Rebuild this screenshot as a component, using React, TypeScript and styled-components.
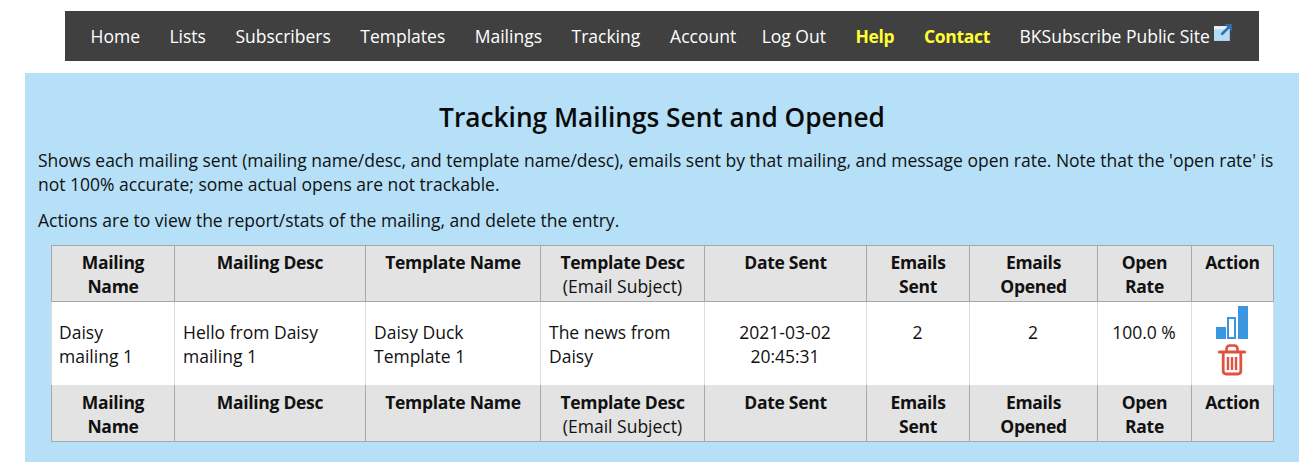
import React from "react";
import styled, { createGlobalStyle } from "styled-components";

const GlobalStyle = createGlobalStyle`
  html, body {
    margin: 0;
    padding: 0;
    background: #ffffff;
    font-family: "Open Sans", "Liberation Sans", sans-serif;
    font-size: 17.5px;
    line-height: 24px;
    color: #111111;
  }
`;

const Page = styled.div`
  width: 1315px;
  height: 468px;
  overflow: hidden;
  padding-top: 11px;
  box-sizing: border-box;
`;

const Nav = styled.nav`
  margin-left: 65px;
  width: 1194px;
  height: 50px;
  box-sizing: border-box;
  background: #404040;
  display: flex;
  align-items: center;
  padding-left: 25.5px;
`;

const NavItem = styled.a<{ $highlight?: boolean; $gap: number }>`
  color: ${({ $highlight }) => ($highlight ? "#ffff33" : "#ffffff")};
  font-weight: ${({ $highlight }) => ($highlight ? 700 : 400)};
  margin-right: ${({ $gap }) => $gap}px;
  white-space: nowrap;
  display: flex;
  align-items: center;
  letter-spacing: ${({ $highlight }) => ($highlight ? "-0.3px" : "0")};
`;

const ExternalIcon = styled.svg`
  width: 19px;
  height: 19px;
  margin-left: 4px;
  margin-top: -8px;
`;

const Main = styled.main`
  margin: 12px 0 0 25px;
  width: 1274px;
  height: 389px;
  box-sizing: border-box;
  background: #b5e0f7;
  padding: 26px 13px 0;
`;

const Title = styled.h1`
  margin: 0 0 13px;
  font-size: 26.25px;
  line-height: 36px;
  font-weight: 600;
  text-align: center;
  color: #0a0a0a;
`;

const Para = styled.p`
  margin: 0 0 12px;
`;

const Table = styled.table`
  margin: 13px 0 0 13px;
  width: 1222px;
  table-layout: fixed;
  border-collapse: collapse;
  border: 1px solid #a8a8a8;
`;

const Col = styled.col<{ $width: number }>`
  width: ${({ $width }) => $width}px;
`;

const HeadCell = styled.th`
  background: #e3e3e3;
  border: 1px solid #a8a8a8;
  border-top: 0;
  padding: 4px 7px 3px;
  height: 48px;
  vertical-align: top;
  text-align: center;
  font-weight: 700;
  letter-spacing: -0.3px;
  color: #111111;
`;

const HeadNote = styled.span`
  font-weight: 400;
  letter-spacing: 0;
`;

const FootCell = styled(HeadCell)`
  padding-top: 5px;
  border-bottom: 0;
`;

const Cell = styled.td`
  background: #ffffff;
  border-left: 1px solid #dddddd;
  border-right: 1px solid #dddddd;
  padding: 18px 16px 17px 8px;
  vertical-align: top;
  text-align: left;
  &:first-child {
    padding-left: 7px;
    padding-right: 32px;
  }
`;

const CenterCell = styled(Cell)`
  padding-left: 7px;
  padding-right: 8px;
  text-align: center;
`;

const ActionCell = styled(CenterCell)`
  padding: 3px 1px 0 0;
  line-height: 0;
`;

const ActionIcon = styled.svg<{ $size: number; $top?: number }>`
  display: block;
  margin: ${({ $top }) => $top ?? 0}px auto 0;
  width: ${({ $size }) => $size}px;
  height: ${({ $size }) => $size}px;
`;

const COLUMNS = [123, 191, 175, 164, 162, 103, 128, 94, 82];

const navItems = [
  { label: "Home", gap: 29.5 },
  { label: "Lists", gap: 29.5 },
  { label: "Subscribers", gap: 29.5 },
  { label: "Templates", gap: 29.5 },
  { label: "Mailings", gap: 29.5 },
  { label: "Tracking", gap: 29.8 },
  { label: "Account", gap: 25.5 },
  { label: "Log Out", gap: 29.5 },
  { label: "Help", gap: 29.5, highlight: true },
  { label: "Contact", gap: 29.5, highlight: true },
];

const HeaderCells = ({ Cell: C }: { Cell: typeof HeadCell }) => (
  <tr>
    <C>Mailing<br />Name</C>
    <C>Mailing Desc</C>
    <C>Template Name</C>
    <C>Template Desc<br /><HeadNote>(Email Subject)</HeadNote></C>
    <C>Date Sent</C>
    <C>Emails<br />Sent</C>
    <C>Emails<br />Opened</C>
    <C>Open<br />Rate</C>
    <C>Action</C>
  </tr>
);

export default function App() {
  return (
    <>
      <GlobalStyle />
      <Page>
        <Nav>
          {navItems.map((item) => (
            <NavItem key={item.label} $gap={item.gap} $highlight={item.highlight}>
              {item.label}
            </NavItem>
          ))}
          <NavItem $gap={0}>
            BKSubscribe Public Site
            <ExternalIcon viewBox="0 0 18 18">
              <rect x="0" y="3" width="15" height="14" fill="#b5dcf5" />
              <rect x="0" y="3" width="15" height="3" fill="#e8f4fc" />
              <path d="M7 11 L14 4" stroke="#2f6fb0" strokeWidth="2.5" />
              <path d="M10 1 H17 V8 Z" fill="#2f6fb0" />
            </ExternalIcon>
          </NavItem>
        </Nav>
        <Main>
          <Title>Tracking Mailings Sent and Opened</Title>
          <Para>
            Shows each mailing sent (mailing name/desc, and template name/desc), emails sent by that mailing, and
            message open rate. Note that the 'open rate' is not 100% accurate; some actual opens are not trackable.
          </Para>
          <Para>Actions are to view the report/stats of the mailing, and delete the entry.</Para>
          <Table>
            <colgroup>
              {COLUMNS.map((w, i) => (
                <Col key={i} $width={w} />
              ))}
            </colgroup>
            <thead>
              <HeaderCells Cell={HeadCell} />
            </thead>
            <tbody>
              <tr>
                <Cell>Daisy mailing 1</Cell>
                <Cell>Hello from Daisy mailing 1</Cell>
                <Cell>Daisy Duck Template 1</Cell>
                <Cell>The news from Daisy</Cell>
                <CenterCell>2021-03-02 20:45:31</CenterCell>
                <CenterCell>2</CenterCell>
                <CenterCell>2</CenterCell>
                <CenterCell>100.0 %</CenterCell>
                <ActionCell>
                  <ActionIcon $size={34} viewBox="0 0 34 34">
                    <rect x="1" y="22" width="10" height="12" fill="#3a96e0" />
                    <rect x="13" y="13" width="7" height="20" fill="#ffffff" stroke="#3a96e0" strokeWidth="2" />
                    <rect x="23" y="1" width="10" height="33" fill="#3a96e0" />
                  </ActionIcon>
                  <ActionIcon $size={32} $top={5} viewBox="0 0 32 32">
                    <path d="M3.5 8 H28.5" stroke="#e0523f" strokeWidth="3.2" strokeLinecap="round" />
                    <path d="M10.5 7 V5 Q10.5 1.5 14 1.5 H18 Q21.5 1.5 21.5 5 V7" fill="none" stroke="#e0523f" strokeWidth="2.6" />
                    <path d="M7.2 9 V27 Q7.2 30 10.2 30 H21.8 Q24.8 30 24.8 27 V9" fill="none" stroke="#e0523f" strokeWidth="2.8" />
                    <path d="M12 13 V26 M16 13 V26 M20 13 V26" stroke="#e0523f" strokeWidth="2.4" />
                  </ActionIcon>
                </ActionCell>
              </tr>
            </tbody>
            <tfoot>
              <HeaderCells Cell={FootCell} />
            </tfoot>
          </Table>
        </Main>
      </Page>
    </>
  );
}
